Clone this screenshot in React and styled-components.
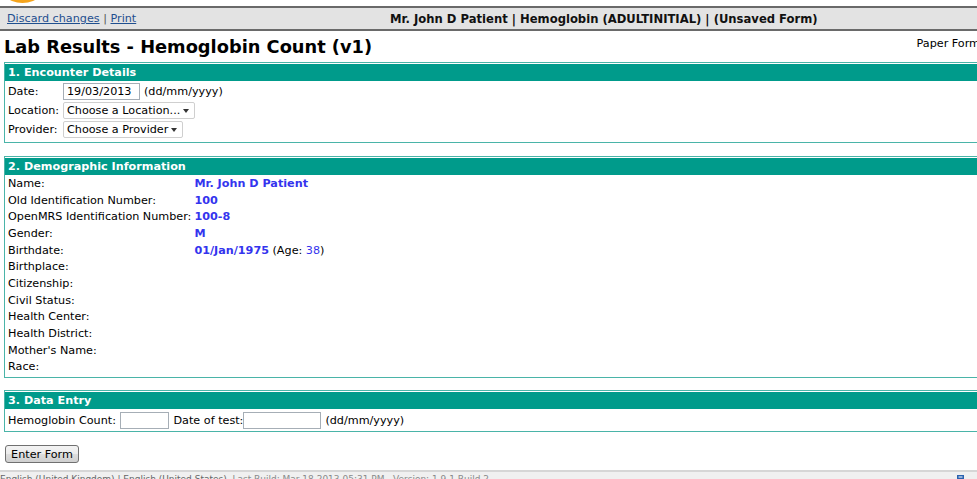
import styled, { createGlobalStyle } from "styled-components"

const GlobalStyle = createGlobalStyle`
  html, body {
    margin: 0;
    padding: 0;
    background: #fff;
    overflow: hidden;
  }
  body {
    font-family: "DejaVu Sans", Verdana, sans-serif;
    font-size: 11.2px;
    color: #000;
  }
`

const Page = styled.div`
  width: 980px;
  height: 479px;
  overflow: hidden;
`

const LogoStrip = styled.div`
  height: 6px;
  overflow: hidden;
  line-height: 0;
`

const Banner = styled.div`
  display: flex;
  align-items: center;
  height: 21px;
  background: #e3e3e3;
  border-top: 2px solid #6a6a6a;
  border-bottom: 2px solid #6a6a6a;
  padding-left: 7px;
`

const BannerLinks = styled.div`
  width: 383px;
  color: #555;
`

const BannerLink = styled.a`
  color: #1f4f8f;
  text-decoration: underline;
  cursor: pointer;
`

const BannerInfo = styled.div`
  font-weight: bold;
  font-size: 11.6px;
  color: #111;
  white-space: nowrap;
`

const TitleRow = styled.div`
  display: flex;
  justify-content: space-between;
  align-items: flex-start;
  height: 31px;
  padding-left: 4px;
`

const Title = styled.h1`
  margin: 5px 0 0;
  font-size: 17.8px;
  line-height: 22px;
  font-weight: bold;
`

const PaperLink = styled.span`
  margin-top: 6px;
  line-height: 14px;
  white-space: nowrap;
`

const Section = styled.div`
  border: 1px solid #4ab4a8;
  padding-top: 1px;
  margin: ${p => p.$top || 0}px 0 0 4px;
`

const SectionHeader = styled.div`
  height: 17px;
  line-height: 17px;
  background: #009b8b;
  color: #fff;
  font-weight: bold;
  padding-left: 3px;
`

const FieldGrid = styled.div`
  display: grid;
  grid-template-columns: ${p => p.$cols};
  grid-auto-rows: ${p => p.$row}px;
  align-items: center;
  column-gap: ${p => p.$gap}px;
  padding: ${p => p.$pad};
`

const Label = styled.span`
  white-space: nowrap;
`

const Value = styled.span`
  color: #3434ee;
  font-weight: ${p => (p.$plain ? "normal" : "bold")};
`

const InlineRow = styled.div`
  display: flex;
  align-items: center;
  gap: ${p => p.$gap ?? 4}px;
  white-space: nowrap;
`

const TextInput = styled.input`
  box-sizing: border-box;
  width: ${p => p.$w}px;
  height: 17px;
  margin: 0 ${p => p.$right || 0}px 0 0;
  padding: 0 3px;
  border: 1px solid #a6aeb6;
  font-family: inherit;
  font-size: 11.2px;
  color: #000;
  background: #fff;
`

const SelectWrap = styled.span`
  position: relative;
  display: inline-block;
  width: ${p => p.$w}px;
  height: 17px;

  &::after {
    content: "";
    position: absolute;
    right: 6px;
    top: 7px;
    border-left: 3px solid transparent;
    border-right: 3px solid transparent;
    border-top: 4px solid #333;
    pointer-events: none;
  }
`

const Select = styled.select`
  appearance: none;
  box-sizing: border-box;
  width: 100%;
  height: 17px;
  margin: 0;
  padding: 0 0 0 3px;
  border: 1px solid #cfcfcf;
  border-radius: 2px;
  background: #fff;
  font-family: inherit;
  font-size: 11.2px;
  color: #000;
`

const ButtonRow = styled.div`
  padding: 13px 0 0 5px;
  height: 18px;
`

const SubmitButton = styled.button`
  width: 74px;
  height: 18px;
  padding: 0;
  border: 1px solid #707070;
  border-radius: 3px;
  background: linear-gradient(#f3f3f3, #ebebeb 50%, #dddddd 50%, #cfcfcf);
  font-family: inherit;
  font-size: 11.2px;
  color: #000;
`

const Footer = styled.div`
  margin-top: 7px;
  height: 20px;
  display: flex;
  justify-content: space-between;
  border-top: 2px solid #d6d6d6;
  background: #f0f0f0;
  padding: 2px 14px 0 0;
  font-size: 9px;
  color: #8a8a8a;
  white-space: nowrap;
`

const FooterLangs = styled.span`
  color: #666;
`

const demographics = [
  ["Name:", "Mr. John D Patient"],
  ["Old Identification Number:", "100"],
  ["OpenMRS Identification Number:", "100-8"],
  ["Gender:", "M"],
  ["Birthdate:", "birth"],
  ["Birthplace:", ""],
  ["Citizenship:", ""],
  ["Civil Status:", ""],
  ["Health Center:", ""],
  ["Health District:", ""],
  ["Mother's Name:", ""],
  ["Race:", ""],
]

const App = () => {
  return (
    <>
      <GlobalStyle />
      <Page>
        <LogoStrip>
          <svg width="60" height="6" viewBox="0 0 60 6">
            <circle cx="22.5" cy="-24.5" r="27.5" fill="#f5a41c" />
          </svg>
        </LogoStrip>

        <Banner>
          <BannerLinks>
            <BannerLink>Discard changes</BannerLink> | <BannerLink>Print</BannerLink>
          </BannerLinks>
          <BannerInfo>Mr. John D Patient | Hemoglobin (ADULTINITIAL) | (Unsaved Form)</BannerInfo>
        </Banner>

        <TitleRow>
          <Title>Lab Results - Hemoglobin Count (v1)</Title>
          <PaperLink>Paper Form</PaperLink>
        </TitleRow>

        <Section>
          <SectionHeader>1. Encounter Details</SectionHeader>
          <FieldGrid $cols="51px auto" $row={19} $gap={4} $pad="1px 3px 3px">
            <Label>Date:</Label>
            <InlineRow>
              <TextInput $w={77} defaultValue="19/03/2013" />
              <span>(dd/mm/yyyy)</span>
            </InlineRow>
            <Label>Location:</Label>
            <InlineRow>
              <SelectWrap $w={132}>
                <Select defaultValue="">
                  <option value="">Choose a Location...</option>
                </Select>
              </SelectWrap>
            </InlineRow>
            <Label>Provider:</Label>
            <InlineRow>
              <SelectWrap $w={120}>
                <Select defaultValue="">
                  <option value="">Choose a Provider</option>
                </Select>
              </SelectWrap>
            </InlineRow>
          </FieldGrid>
        </Section>

        <Section $top={13}>
          <SectionHeader>2. Demographic Information</SectionHeader>
          <FieldGrid $cols="auto 1fr" $row={16.7} $gap={3} $pad="0 3px 2px">
            {demographics.map(([label, value]) => [
              <Label key={label}>{label}</Label>,
              value === "birth" ? (
                <span key={label + "v"}>
                  <Value>01/Jan/1975</Value> (Age: <Value $plain>38</Value>)
                </span>
              ) : (
                <Value key={label + "v"}>{value}</Value>
              ),
            ])}
          </FieldGrid>
        </Section>

        <Section $top={12}>
          <SectionHeader>3. Data Entry</SectionHeader>
          <FieldGrid $cols="auto" $row={20} $gap={0} $pad="1px 3px 1px">
            <InlineRow $gap={0}>
              <span>Hemoglobin Count:&nbsp;</span>
              <TextInput $w={49} $right={5} />
              <span>Date of test:</span>
              <TextInput $w={78} $right={4} />
              <span>(dd/mm/yyyy)</span>
            </InlineRow>
          </FieldGrid>
        </Section>

        <ButtonRow>
          <SubmitButton>Enter Form</SubmitButton>
        </ButtonRow>

        <Footer>
          <span>
            <FooterLangs>English (United Kingdom) | English (United States)</FooterLangs>
            &nbsp; Last Build: Mar 18 2013 05:31 PM &nbsp; Version: 1.9.1 Build 2
          </span>
          <svg width="10" height="10" viewBox="0 0 10 10">
            <rect x="1" y="1" width="7" height="8" fill="#2a62b0" />
            <rect x="2.5" y="2.5" width="4" height="1" fill="#fff" />
          </svg>
        </Footer>
      </Page>
    </>
  )
}

export default App
